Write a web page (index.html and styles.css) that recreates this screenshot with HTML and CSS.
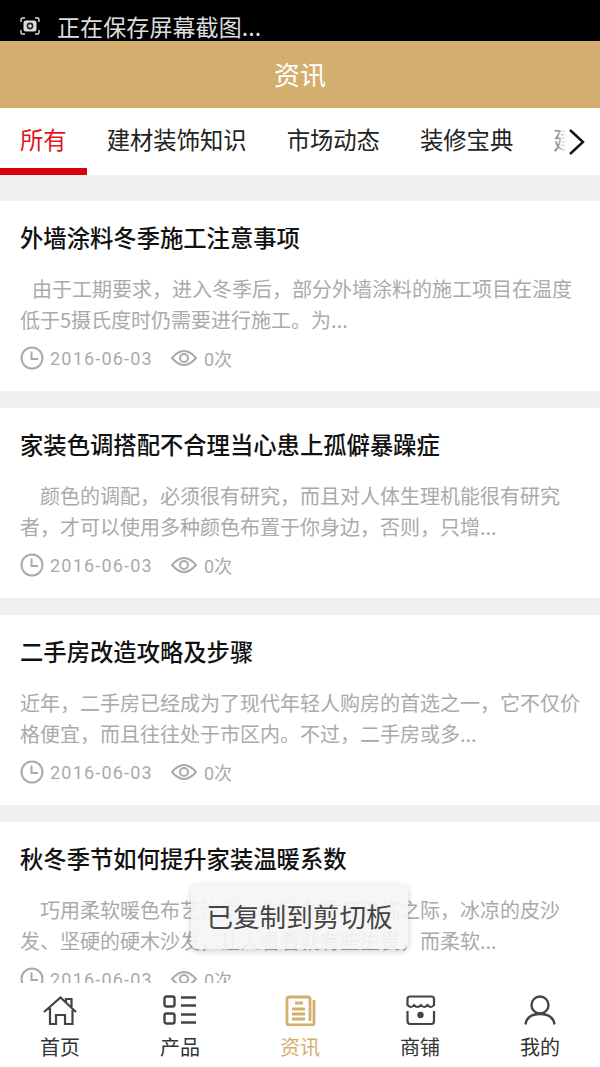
FILE: index.html
```html
<!DOCTYPE html>
<html lang="zh-CN">
<head>
  <meta charset="UTF-8">
  <meta name="viewport" content="width=device-width, initial-scale=1.0">
  <title>资讯</title>
  <link rel="stylesheet" href="styles.css">
</head>
<body>
  <!-- system status bar -->
  <div class="status">
    <svg class="status-icon" width="20" height="18" viewBox="0 0 20 18" fill="none" stroke="#ddd" stroke-width="1.4">
      <path d="M1 5V2.500Q1 1 2.500 1H5M15 1h2.500Q19 1 19 2.500V5M1 13v2.500Q1 17 2.500 17H5M15 17h2.500Q19 17 19 15.500V13"/>
      <rect x="3.500" y="3.500" width="13" height="11" rx="2.500" fill="#ddd" stroke="none"/>
      <circle cx="10" cy="9" r="3.400" fill="#222" stroke="none"/>
      <circle cx="10" cy="9" r="1.800" fill="#ddd" stroke="none"/>
    </svg>
    <span class="status-text">正在保存屏幕截图...</span>
  </div>

  <header class="header">资讯</header>

  <nav class="tabs">
    <a class="tab active">所有</a>
    <a class="tab">建材装饰知识</a>
    <a class="tab">市场动态</a>
    <a class="tab">装修宝典</a>
    <a class="tab">建材资讯</a>
    <div class="tabs-more">
      <svg width="18" height="28" viewBox="0 0 18 28" fill="none" stroke="#111" stroke-width="2.400">
        <path d="M2 2l13 12L2 26"/>
      </svg>
    </div>
  </nav>

  <main class="list">
    <article class="card">
      <h2 class="card-title">外墙涂料冬季施工注意事项</h2>
      <p class="card-text indent-small">由于工期要求，进入冬季后，部分外墙涂料的施工项目在温度低于5摄氏度时仍需要进行施工。为...</p>
      <div class="meta">
        <svg class="icon-clock" width="24" height="24" viewBox="0 0 24 24" fill="none" stroke="#aaa" stroke-width="2"><circle cx="12" cy="12" r="10.500"/><path d="M11.500 5.500V13H18"/></svg>
        <span class="date">2016-06-03</span>
        <svg class="icon-eye" width="26" height="18" viewBox="0 0 26 18" fill="none" stroke="#aaa" stroke-width="2"><path d="M1 9Q13 -5 25 9Q13 23 1 9Z"/><circle cx="13" cy="9" r="4"/></svg>
        <span class="views">0次</span>
      </div>
    </article>

    <article class="card">
      <h2 class="card-title">家装色调搭配不合理当心患上孤僻暴躁症</h2>
      <p class="card-text indent">颜色的调配，必须很有研究，而且对人体生理机能很有研究者，才可以使用多种颜色布置于你身边，否则，只增...</p>
      <div class="meta">
        <svg class="icon-clock" width="24" height="24" viewBox="0 0 24 24" fill="none" stroke="#aaa" stroke-width="2"><circle cx="12" cy="12" r="10.500"/><path d="M11.500 5.500V13H18"/></svg>
        <span class="date">2016-06-03</span>
        <svg class="icon-eye" width="26" height="18" viewBox="0 0 26 18" fill="none" stroke="#aaa" stroke-width="2"><path d="M1 9Q13 -5 25 9Q13 23 1 9Z"/><circle cx="13" cy="9" r="4"/></svg>
        <span class="views">0次</span>
      </div>
    </article>

    <article class="card">
      <h2 class="card-title">二手房改造攻略及步骤</h2>
      <p class="card-text">近年，二手房已经成为了现代年轻人购房的首选之一，它不仅价格便宜，而且往往处于市区内。不过，二手房或多...</p>
      <div class="meta">
        <svg class="icon-clock" width="24" height="24" viewBox="0 0 24 24" fill="none" stroke="#aaa" stroke-width="2"><circle cx="12" cy="12" r="10.500"/><path d="M11.500 5.500V13H18"/></svg>
        <span class="date">2016-06-03</span>
        <svg class="icon-eye" width="26" height="18" viewBox="0 0 26 18" fill="none" stroke="#aaa" stroke-width="2"><path d="M1 9Q13 -5 25 9Q13 23 1 9Z"/><circle cx="13" cy="9" r="4"/></svg>
        <span class="views">0次</span>
      </div>
    </article>

    <article class="card">
      <h2 class="card-title">秋冬季节如何提升家装温暖系数</h2>
      <p class="card-text indent">巧用柔软暖色布艺沙发，当秋冬季节来临之际，冰凉的皮沙发、坚硬的硬木沙发，让人看看就有些生畏，而柔软...</p>
      <div class="meta">
        <svg class="icon-clock" width="24" height="24" viewBox="0 0 24 24" fill="none" stroke="#aaa" stroke-width="2"><circle cx="12" cy="12" r="10.500"/><path d="M11.500 5.500V13H18"/></svg>
        <span class="date">2016-06-03</span>
        <svg class="icon-eye" width="26" height="18" viewBox="0 0 26 18" fill="none" stroke="#aaa" stroke-width="2"><path d="M1 9Q13 -5 25 9Q13 23 1 9Z"/><circle cx="13" cy="9" r="4"/></svg>
        <span class="views">0次</span>
      </div>
    </article>
  </main>

  <!-- bottom navigation -->
  <footer class="nav">
    <a class="nav-item">
      <svg width="34" height="30" viewBox="0 0 34 30" fill="none" stroke="#444" stroke-width="2.200">
        <path d="M1 17L17.500 2.500L33 17M23 7.500V4H28.500V12M7 13V29H13V20H22V29H29.500V13"/>
      </svg>
      <span>首页</span>
    </a>
    <a class="nav-item">
      <svg width="34" height="30" viewBox="0 0 34 30" fill="none" stroke="#444" stroke-width="2.400">
        <rect x="1.500" y="1.500" width="10" height="10" rx="2"/>
        <rect x="1.500" y="18.500" width="10" height="10" rx="2"/>
        <path d="M18 2.500H33M18 10.500H33M18 19.500H33M18 27.500H33"/>
      </svg>
      <span>产品</span>
    </a>
    <a class="nav-item current">
      <svg width="34" height="31" viewBox="0 0 34 31" fill="none" stroke="#d4ae6e" stroke-width="2.800">
        <path d="M27 2H6Q4 2 4 4V28Q4 30 6 30H29Q31 30 31 28V5M27 2V26"/>
        <path d="M12 8H20M9 14H22M9 19H22M9 24H22"/>
      </svg>
      <span class="nav-label-short">资讯</span>
    </a>
    <a class="nav-item">
      <svg width="34" height="30" viewBox="0 0 34 30" fill="none" stroke="#444" stroke-width="2.200">
        <path d="M4.500 11V4Q4.500 1.500 7 1.500H28.500Q31 1.500 31 4V11"/>
        <path d="M4.500 10Q8 14 11 10Q14.500 14 18 10Q21 14 24.500 10Q28 14 31 10" stroke-width="2"/>
        <path d="M4.500 16V26Q4.500 29 7.500 29H28Q31 29 31 26V16"/>
        <circle cx="17.500" cy="20" r="3.200" fill="#444" stroke="none"/>
      </svg>
      <span>商铺</span>
    </a>
    <a class="nav-item">
      <svg width="34" height="30" viewBox="0 0 34 30" fill="none" stroke="#444" stroke-width="2.400">
        <circle cx="17" cy="10" r="8.500"/>
        <path d="M2.500 29.500Q4 19 17 19Q30 19 31.500 29.500"/>
      </svg>
      <span>我的</span>
    </a>
  </footer>

  <div class="toast">已复制到剪切板</div>
</body>
</html>
```

FILE: styles.css
```css
html, body {
  margin: 0;
  padding: 0;
}
body {
  position: relative;
  width: 600px;
  height: 1067px;
  display: flex;
  flex-direction: column;
  overflow: hidden;
  background-color: #f0f0f0;
  font-family: "Noto Sans CJK SC", "Noto Sans", sans-serif;
}
.status {
  flex: none;
  height: 41px;
  display: flex;
  align-items: center;
  padding: 11px 0 0 20px;
  box-sizing: border-box;
  background-color: #000;
  color: #ddd;
  font-size: 23px;
}
.status-icon {
  margin-right: 17px;
}
.status-text {
  letter-spacing: 0.1px;
}
.header {
  flex: none;
  height: 67px;
  line-height: 65px;
  text-align: center;
  background-color: #d4ae6e;
  color: #fff;
  font-size: 26px;
}
.tabs {
  flex: none;
  position: relative;
  height: 67px;
  display: flex;
  overflow: hidden;
  background-color: #fff;
}
.tab {
  flex: none;
  padding: 0 20px;
  line-height: 62px;
  font-size: 23.330px;
  color: #222;
}
.tab.active {
  color: #e0161c;
  box-shadow: inset 0 -7px 0 #d9000a;
}
.tabs-more {
  position: absolute;
  top: 0;
  right: 0;
  bottom: 0;
  width: 48px;
  display: flex;
  align-items: center;
  justify-content: flex-end;
  padding-right: 14px;
  box-sizing: border-box;
  background: linear-gradient(to right, rgba(255, 255, 255, 0.2), #fff 30%);
}
.list {
  flex: 1;
  min-height: 0;
  overflow: hidden;
  padding-top: 26px;
}
.card {
  height: 190px;
  margin-bottom: 17px;
  padding: 0 20px;
  box-sizing: border-box;
  background-color: #fff;
  overflow: hidden;
}
.card-title {
  margin: 0;
  padding-top: 19px;
  line-height: 34px;
  font-size: 23.330px;
  font-weight: 500;
  color: #111;
}
.card-text {
  margin: 19px 0 0;
  line-height: 31px;
  font-size: 20px;
  color: #aaa;
}
.indent-small {
  text-indent: 12px;
}
.indent {
  text-indent: 20px;
}
.meta {
  display: flex;
  align-items: center;
  margin-top: 8px;
  height: 30px;
  color: #aaa;
  font-family: Roboto, "Noto Sans CJK SC", sans-serif;
  font-size: 18px;
}
.date {
  margin-left: 6px;
  letter-spacing: 1.200px;
}
.icon-eye {
  margin-left: 18px;
}
.views {
  margin-left: 7px;
}
.nav {
  flex: none;
  height: 84px;
  display: flex;
  background-color: #fff;
}
.nav-item {
  flex: 1;
  display: flex;
  flex-direction: column;
  align-items: center;
  padding-top: 12px;
  box-sizing: border-box;
  color: #333;
  font-size: 20px;
}
.nav-item span {
  margin-top: 5px;
  line-height: 34px;
}
.nav-item .nav-label-short {
  margin-top: 4px;
}
.nav-item.current {
  color: #d4ae6e;
}
.toast {
  position: absolute;
  left: 191px;
  top: 884px;
  width: 217px;
  height: 65px;
  line-height: 63px;
  text-align: center;
  border-radius: 6px;
  background-color: rgba(245, 245, 245, 0.9);
  box-shadow: 0 2px 6px rgba(0, 0, 0, 0.2);
  color: #444;
  font-size: 26.600px;
}
```
